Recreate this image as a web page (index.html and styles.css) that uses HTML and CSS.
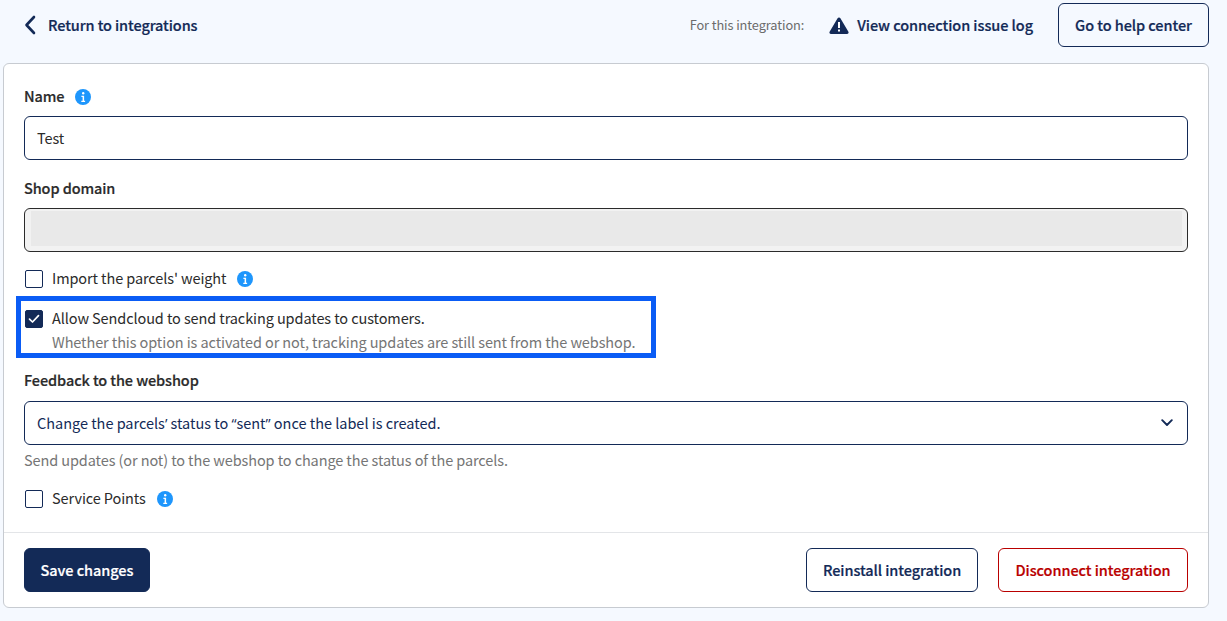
FILE: index.html
```html
<!DOCTYPE html>
<html lang="en">
<head>
<meta charset="utf-8">
<title>Integration settings</title>
<link rel="stylesheet" href="styles.css">
</head>
<body>
<header class="topbar">
  <a class="back">
    <svg class="back-icon" width="12" height="20" viewBox="0 0 12 20"><path d="M10 2 2.500 10l7.500 8" fill="none" stroke="#132a57" stroke-width="2.600" stroke-linecap="round" stroke-linejoin="round"/></svg>
    <span>Return to integrations</span>
  </a>
  <div class="top-actions">
    <span class="muted-small">For this integration:</span>
    <a class="log-link">
      <svg width="20" height="17" viewBox="0 0 20 17"><path d="M10 .5c.6 0 1.100.3 1.400.8l8 13.400c.6 1-.1 2.300-1.400 2.300H2c-1.300 0-2-1.300-1.400-2.300l8-13.400C8.900.8 9.400.5 10 .5z" fill="#132a57"/><rect x="9" y="5" width="2" height="6" fill="#fff"/><rect x="9" y="12.500" width="2" height="2" fill="#fff"/></svg>
      <span>View connection issue log</span>
    </a>
    <button class="btn btn-outline help-btn">Go to help center</button>
  </div>
</header>

<main class="card">
  <section class="card-body">
    <div class="label-row label-name">
      <span class="label">Name</span>
      <svg class="info" width="16" height="16" viewBox="0 0 16 16"><circle cx="8" cy="8" r="8" fill="#1e96fc"/><circle cx="8.200" cy="4.300" r="1.200" fill="#fff"/><path d="M6.400 6.700h2.700v5h1v1.200H6.300v-1.200h1.300V7.900H6.400z" fill="#fff"/></svg>
    </div>
    <div class="input">Test</div>

    <div class="label-row label-domain"><span class="label">Shop domain</span></div>
    <div class="input input-masked"><div class="mask"></div></div>

    <div class="check-row row-weight">
      <span class="checkbox"></span>
      <span class="check-text">Import the parcels' weight</span>
      <svg class="info" width="16" height="16" viewBox="0 0 16 16"><circle cx="8" cy="8" r="8" fill="#1e96fc"/><circle cx="8.200" cy="4.300" r="1.200" fill="#fff"/><path d="M6.400 6.700h2.700v5h1v1.200H6.300v-1.200h1.300V7.900H6.400z" fill="#fff"/></svg>
    </div>

    <div class="tracking">
      <div class="highlight"></div>
      <div class="check-row">
        <span class="checkbox checked">
          <svg width="12" height="10" viewBox="0 0 12 10"><path d="M1.500 5.200 4.500 8l6-6.300" fill="none" stroke="#fff" stroke-width="1.700" stroke-linecap="round" stroke-linejoin="round"/></svg>
        </span>
        <span class="check-text">Allow Sendcloud to send tracking updates to customers.</span>
      </div>
      <p class="hint hint-tracking">Whether this option is activated or not, tracking updates are still sent from the webshop.</p>
    </div>

    <div class="label-row label-feedback"><span class="label">Feedback to the webshop</span></div>
    <div class="input select">
      <span>Change the parcels<span class="quote">’</span> status to <span class="quote">“</span>sent<span class="quote">”</span> once the label is created.</span>
      <svg width="12" height="8" viewBox="0 0 12 8"><path d="M1.200 1.200 6 6l4.800-4.800" fill="none" stroke="#132a57" stroke-width="1.900" stroke-linecap="round" stroke-linejoin="round"/></svg>
    </div>
    <p class="hint hint-feedback">Send updates (or not) to the webshop to change the status of the parcels.</p>

    <div class="check-row row-service">
      <span class="checkbox"></span>
      <span class="check-text">Service Points</span>
      <svg class="info" width="16" height="16" viewBox="0 0 16 16"><circle cx="8" cy="8" r="8" fill="#1e96fc"/><circle cx="8.200" cy="4.300" r="1.200" fill="#fff"/><path d="M6.400 6.700h2.700v5h1v1.200H6.300v-1.200h1.300V7.900H6.400z" fill="#fff"/></svg>
    </div>
  </section>
  <footer class="card-footer">
    <button class="btn btn-primary">Save changes</button>
    <div class="footer-right">
      <button class="btn btn-outline">Reinstall integration</button>
      <button class="btn btn-danger">Disconnect integration</button>
    </div>
  </footer>
</main>
</body>
</html>
```
FILE: styles.css
```css
* { box-sizing: border-box; }
html, body { height: 100%; }
body {
  margin: 0;
  background: #f5f9ff;
  color: #2b2b2b;
  font-family: "Noto Sans CJK SC", "Open Sans", sans-serif;
  font-size: 14.5px;
  letter-spacing: -0.1px;
  line-height: 20px;
  overflow: hidden;
}
.topbar {
  width: 1209px;
  height: 63px;
  padding: 3px 0 0 24px;
  display: flex;
  justify-content: space-between;
  align-items: flex-start;
}
.back {
  display: flex;
  align-items: center;
  gap: 12px;
  height: 44px;
  color: #132a57;
  font-weight: 500;
  -webkit-text-stroke: 0.2px currentColor;
}
.top-actions { display: flex; align-items: center; }
.muted-small { color: #6b6b6b; font-size: 12.8px; margin-right: 25px; }
.log-link {
  display: flex;
  align-items: center;
  gap: 8px;
  color: #132a57;
  font-weight: 500;
  letter-spacing: -0.06px;
  -webkit-text-stroke: 0.2px currentColor;
  margin-right: 25px;
}
.btn {
  height: 44px;
  border-radius: 6px;
  padding: 0 0 2px;
  font-family: inherit;
  font-size: 14.5px;
  letter-spacing: -0.07px;
  font-weight: 500;
  -webkit-text-stroke: 0.2px currentColor;
  background: #fff;
  border: 1px solid #132a57;
  color: #132a57;
  cursor: pointer;
}
.help-btn { background: transparent; width: 151px; }
.btn-primary { background: #132a57; color: #fff; width: 126px; }
.btn-danger { border-color: #b90000; color: #b90000; width: 190px; }
.card {
  margin-left: 3px;
  width: 1206px;
  height: 545px;
  background: #fff;
  border: 1px solid #c7cbd1;
  border-radius: 6px;
  display: flex;
  flex-direction: column;
}
.card-body { flex: 1; padding: 23px 20px 0; }
.label-row { display: flex; align-items: center; gap: 11px; height: 20px; }
.label { font-weight: 500; color: #2b2b2b; padding-bottom: 2px; -webkit-text-stroke: 0.2px currentColor; }
.label-name { margin-bottom: 9px; }
.label-domain { margin-top: 19px; margin-bottom: 9px; }
.label-feedback { margin-top: 19px; margin-bottom: 10px; }
.input {
  height: 44px;
  border: 1px solid #132a57;
  border-radius: 6px;
  padding: 0 12px;
  display: flex;
  align-items: center;
  color: #2b2b2b;
  background: #fff;
}
.input-masked { padding: 2px 5px 5px 6px; border-color: #2b2b2b; background: #f2f2f2; }
.mask { width: 100%; height: 100%; background: #e9e9e9; }
.select { justify-content: space-between; color: #132a57; padding-right: 14px; letter-spacing: -0.02px; }
.quote { font-family: "Open Sans", sans-serif; }
.check-row { display: flex; align-items: center; height: 20px; }
.check-text { margin-left: 9px; padding-bottom: 2px; }
.check-row .info { margin-left: 11px; }
.row-weight { margin-top: 17px; }
.row-service { margin-top: 19px; }
.checkbox {
  width: 18px;
  height: 18px;
  border: 1px solid #132a57;
  border-radius: 2px;
  background: #fff;
  display: flex;
  align-items: center;
  justify-content: center;
  margin-left: 1px;
}
.checkbox.checked { background: #132a57; }
.tracking { position: relative; margin-top: 20px; }
.highlight {
  position: absolute;
  left: -8px;
  top: -13px;
  width: 640px;
  height: 62px;
  border: 5px solid #0a5cf5;
  pointer-events: none;
}
.hint { margin: 0; color: #757575; }
.hint-tracking { margin-top: 3px; margin-left: 28px; }
.hint-feedback { margin-top: 5px; }
.card-footer {
  height: 75px;
  border-top: 1px solid #e3e5e8;
  padding: 15px 20px 0;
  display: flex;
  justify-content: space-between;
  align-items: flex-start;
}
.footer-right { display: flex; gap: 20px; }
.footer-right .btn-outline { width: 172px; }
```
